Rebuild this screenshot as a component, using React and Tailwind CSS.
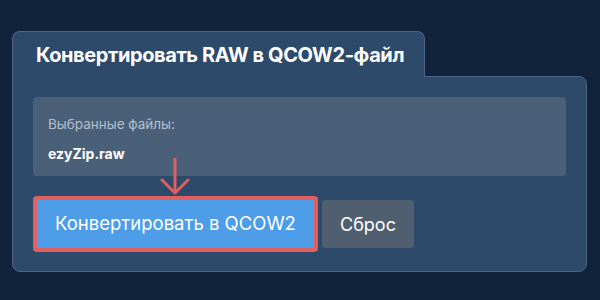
import { useState } from "react";

const DownArrow = () => (
  <svg width="30" height="38" viewBox="0 0 30 38" className="absolute left-[147px] top-[81px]">
    <path d="M15 1 L15 35 M2 22 L15 35 L28 22" stroke="#e05f5f" strokeWidth="3" fill="none" strokeLinecap="round" strokeLinejoin="round" />
  </svg>
);

const App = () => {
  const [files, setFiles] = useState(["ezyZip.raw"]);

  return (
    <div className="w-[600px] h-[300px] bg-[#10233a] pl-[12px] pt-[31px] font-['Inter',sans-serif]">
      <div className="relative z-10 w-[413px] h-[46px] -mb-px bg-[#2d4a6b] border border-b-0 border-[#4b6686] rounded-t-[8px] flex items-center pl-[23px]">
        <h1 className="whitespace-nowrap text-[20px] font-bold text-white tracking-[-0.4px]">Конвертировать RAW в QCOW2-файл</h1>
      </div>
      <div className="relative w-[575px] bg-[#2d4a6b] border border-[#4b6686] rounded-b-[8px] rounded-tr-[8px] px-[20px] pt-[20px] pb-[19px]">
        <div className="h-[79px] bg-[#4a6079] rounded-[4px] px-[15px] pt-[17px]">
          <p className="text-[13.5px] text-[#b4bfcc]">Выбранные файлы:</p>
          {files.map((f) => (
            <p key={f} className="mt-[9px] text-[14px] font-bold text-white">{f}</p>
          ))}
        </div>
        <div className="flex items-center gap-[4px] mt-[20px]">
          <button
            type="button"
            className="h-[56px] w-[285px] bg-[#4d9de8] border-[4px] border-[#e05f5f] rounded-[4px] text-white text-[18.5px]"
          >
            Конвертировать в QCOW2
          </button>
          <button
            type="button"
            onClick={() => setFiles([])}
            className="h-[48px] w-[92px] bg-[#4f5f70] rounded-[4px] text-white text-[18px]"
          >
            Сброс
          </button>
        </div>
        <DownArrow />
      </div>
    </div>
  );
};

export default App;
